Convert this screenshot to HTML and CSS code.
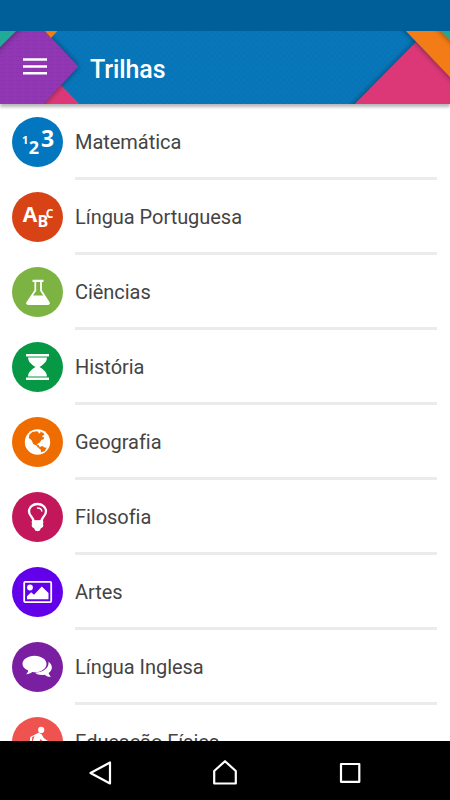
FILE: index.html
```html
<!DOCTYPE html>
<html lang="pt-BR">
<head>
<meta charset="utf-8">
<title>Trilhas</title>
<link rel="stylesheet" href="styles.css">
</head>
<body>
<div class="screen">
  <div class="status"></div>
  <header class="header">
    <svg class="header-art" viewBox="0 0 450 73">
      <defs>
        <filter id="sh" x="-20%" y="-20%" width="140%" height="140%"><feDropShadow dx="0" dy="0" stdDeviation="3" flood-color="#000" flood-opacity=".5"/></filter>
        <pattern id="dots" width="6" height="6" patternUnits="userSpaceOnUse"><path d="M0 1h3M3 4h3" stroke="#003a80" stroke-opacity=".09"/></pattern>
        <pattern id="lines" width="8" height="4" patternUnits="userSpaceOnUse"><path d="M0 1.500h6" stroke="#500070" stroke-opacity=".08"/></pattern>
      </defs>
      <rect width="450" height="73" fill="#0877ba"/>
      <rect width="450" height="73" fill="url(#dots)"/>
      <path d="M61 54L79.500 73H43z" fill="#dc3878"/>
      <path d="M-10-10h45L78 35.500 43 73l-10 10h-43z" fill="#8f36b2" filter="url(#sh)"/>
      <path d="M-10-10h55V0L78 35.500 43 73l-53 10z" fill="#9137b4"/>
      <path d="M-10-10h55V0L78 35.500 43 73H0z" fill="url(#lines)"/>
      <path d="M45 0h12.500l-6.500 7z" fill="#f47b10"/>
      <path d="M-10-10h36L16 0 0 16l-10 10z" fill="#21aa99" filter="url(#sh)"/>
      <path d="M345 83L416 11 470 65v18z" fill="#dc3878" filter="url(#sh)"/>
      <path d="M396-10h80v82l-26-26L406 0z" fill="#f47b14" filter="url(#sh)"/>
      <path d="M431-10h39v39L450 9z" fill="#1ea998" filter="url(#sh)"/>
    </svg>
    <svg class="menu" viewBox="0 0 24 17"><path d="M0 1.500h24M0 8.500h24M0 15.200h24" stroke="#fff" stroke-width="2.500"/></svg>
    <h1 class="title">Trilhas</h1>
  </header>
  <main class="list">
    <div class="row"><svg class="icon blue" viewBox="0 0 50 50"><text x="9.500" y="26.500" font-size="11">1</text><text x="16.200" y="37.300" font-size="18">2</text><text x="28.600" y="29.500" font-size="23">3</text></svg><div class="label">Matemática</div></div>
    <div class="row"><svg class="icon red" viewBox="0 0 50 50"><text x="10.200" y="29.500" font-size="21">A</text><text x="25" y="35.300" font-size="16">B</text><text x="33.300" y="26" font-size="12">C</text></svg><div class="label">Língua Portuguesa</div></div>
    <div class="row"><svg class="icon lime" viewBox="0 0 50 50"><path d="M20 12.800h11v2.200H20z"/><path d="M22.800 14v9.500L14.800 35.500q-1 1.500 1 1.500h19.400q2 0 1-1.500L28.500 23.500V14" class="stroke"/><path d="M19.500 28.500h12.300l5 9h-22.500z"/></svg><div class="label">Ciências</div></div>
    <div class="row"><svg class="icon green" viewBox="0 0 50 50"><path d="M13.500 12h23v2.500h-23zM13.500 35.500h23V38h-23zM15.500 15.500h19c-.3 4.500-3 6.500-7.500 9.500 4.500 3 7.200 5 7.500 9.500h-19c.3-4.500 3-6.500 7.500-9.500-4.500-3-7.200-5-7.500-9.500z"/></svg><div class="label">História</div></div>
    <div class="row"><svg class="icon orange" viewBox="0 0 50 50"><circle cx="25" cy="25" r="12.700"/><path class="hole" d="M16.800 17.800l3-2.800 4.700-.8 1.500.8v1.500l2-.5-.5-1.500 3.500 1.500 1 2-2 .4-.2 1.600 2.100.6-.8 1.700-2.300.8-1.300 2.200-2.300 1.400-.8 1.500 2-.2.600 2 2.500 1-.5.500-3.700-1-1.400-2-3.200-1.600-1.500-3.600-2.900-2.400zM27 30.200l2.500-1.200 2.600 1.500 2.100.2-1.900 3.200-3.800 1.500-.2-2.600-1.700-1.100z"/></svg><div class="label">Geografia</div></div>
    <div class="row"><svg class="icon pink" viewBox="0 0 50 50"><path class="bulb" d="M21 29.500c0-5-4.500-5-4.500-10.300 0-4 3.800-7.200 8.500-7.200s8.500 3.200 8.500 7.200c0 5.300-4.500 5.300-4.500 10.300z"/><path d="M19.500 28.500h11l.4 2-.5 1.300.5 1.200-.5 2-2.200 1.500-.8 1.900-2.400.8-2.400-.8-.8-1.900-2.200-1.500-.5-2 .5-1.200-.5-1.300z"/><path class="glint" d="M25 16q3.800 0 4.300 3"/></svg><div class="label">Filosofia</div></div>
    <div class="row"><svg class="icon indigo" viewBox="0 0 50 50"><rect class="frame" x="11.700" y="14.900" width="27" height="20.200" rx="1"/><circle cx="17.500" cy="20.500" r="2.900"/><path d="M14.500 32.300v-3l4.200-4 2.800 2.500 7.800-8.300 6.700 6.500v6.300z"/></svg><div class="label">Artes</div></div>
    <div class="row"><svg class="icon violet" viewBox="0 0 50 50"><path d="M36 19.800c4.200 3 4.700 8.200.2 11.200.3 1.700 1.300 2.700 2.300 3.800-3 .3-4.800-.8-6.300-2.100-3.800.7-7.500-.1-9.700-2 8.500-.3 14.300-4.900 13.500-10.900z"/><path d="M22 13.800c6.700 0 12 3.600 12 8.200s-5.300 8.300-12 8.300l-2.300-.2c-1.700 1.300-3.400 2.100-6.200 2.200 1.200-1 2-2.200 2.200-3.800-3.500-1.500-5.700-3.900-5.700-6.500 0-4.600 5.300-8.200 12-8.200z"/></svg><div class="label">Língua Inglesa</div></div>
    <div class="row"><svg class="icon coral" viewBox="0 0 50 50"><circle cx="28.700" cy="12.900" r="3.100"/><path d="M17.700 20l8.300-4.200 3 1.200 2.300 4 4.700 3.500-.8 2-5.700-3-1.500-1.500-1.300 3 4 5-1 8-3-1 .4-6-4.600-4-5 8-3-2 5.800-9 1.700-5-2.300 1-.3 4.500-2-.4z"/></svg><div class="label">Educação Física</div></div>
  </main>
  <nav class="navbar">
    <svg viewBox="0 0 30 30"><path d="M5.500 15L25 4.500v21z"/></svg>
    <svg viewBox="0 0 30 30"><path d="M4.200 25.500V13L15 3.200 25.800 13v12.500z"/></svg>
    <svg viewBox="0 0 30 30"><path d="M6 6h18.300v17.800H6z"/></svg>
  </nav>
</div>
</body>
</html>
```
FILE: styles.css
```css
body { margin: 0; background: #fff; font-family: Roboto, sans-serif; }
.screen { display: flex; flex-direction: column; width: 450px; height: 800px; overflow: hidden; }
.status { height: 31px; flex: none; background: #005f98; }
.header { position: relative; z-index: 1; display: flex; align-items: center; flex: none; height: 73px; box-shadow: 0 3px 3px rgba(0, 0, 0, .28); }
.header-art { position: absolute; inset: 0; width: 450px; height: 73px; overflow: hidden; }
.menu { position: relative; width: 24px; height: 17px; margin: -2px 0 0 23px; }
.title { position: relative; margin: 4px 0 0 43px; font-size: 25px; line-height: 30px; font-weight: 500; letter-spacing: -.1px; color: #fff; }
.list { flex: 1; min-height: 0; overflow: hidden; }
.row { display: flex; height: 75px; padding: 0 13px 0 12px; }
.icon { flex: none; width: 51px; height: 50px; margin-top: 13px; border-radius: 50%; fill: #fff; }
.icon text { font-family: "Open Sans", sans-serif; font-weight: 700; }
.label { flex: 1; box-sizing: border-box; height: 76px; margin-left: 12px; padding-top: 23px; font-size: 20px; line-height: 30px; letter-spacing: -.04px; color: #444; border-bottom: 3px solid #ebebeb; }
.blue { background: #0277bf; }
.red { background: #d84315; }
.lime { background: #7cb342; }
.green { background: #079845; }
.orange { background: #ef6c00; }
.pink { background: #c2185b; }
.indigo { background: #6200ea; }
.violet { background: #7b1fa2; }
.coral { background: #ef5350; }
.stroke, .bulb, .glint, .frame { fill: none; stroke: #fff; stroke-width: 1.8; }
.bulb { stroke-width: 2.3; }
.glint { stroke-width: 1.5; stroke-linecap: round; }
.hole { fill: #ef6c00; }
.navbar { display: flex; box-sizing: border-box; align-items: center; justify-content: center; gap: 95px; flex: none; height: 59px; padding-top: 4px; background: #000; }
.navbar svg { width: 30px; height: 30px; fill: none; stroke: #fff; stroke-width: 2.2; stroke-linejoin: round; }
```
